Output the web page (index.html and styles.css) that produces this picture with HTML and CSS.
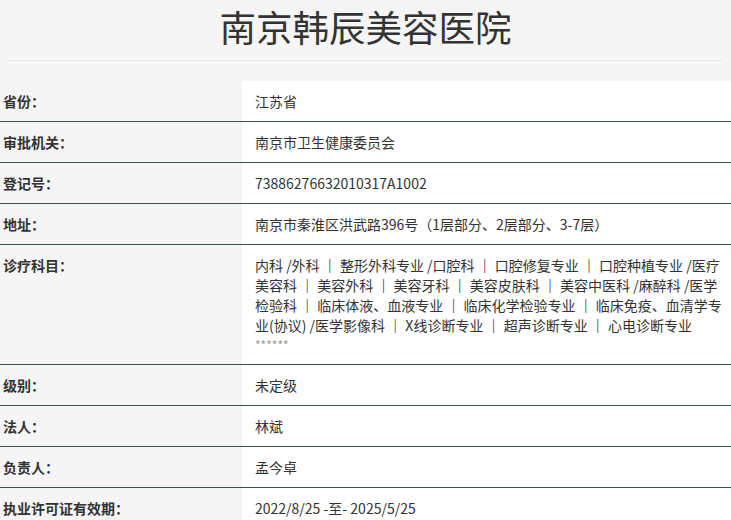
FILE: index.html
```html
<!DOCTYPE html>
<html lang="zh-CN">
<head>
<meta charset="utf-8">
<title>南京韩辰美容医院</title>
<link rel="stylesheet" href="styles.css">
</head>
<body>
<header class="head">
  <h1 class="title">南京韩辰美容医院</h1>
  <div class="rule"></div>
</header>
<div class="info">
  <div class="row"><div class="label">省份：</div><div class="value">江苏省</div></div>
  <div class="row"><div class="label">审批机关：</div><div class="value">南京市卫生健康委员会</div></div>
  <div class="row"><div class="label">登记号：</div><div class="value">73886276632010317A1002</div></div>
  <div class="row"><div class="label">地址：</div><div class="value">南京市秦淮区洪武路396号（1层部分、2层部分、3-7层）</div></div>
  <div class="row"><div class="label">诊疗科目：</div><div class="value">内科 /外科 <b class="sep">｜</b> 整形外科专业 /口腔科 <b class="sep">｜</b> 口腔修复专业 <b class="sep">｜</b> 口腔种植专业 /医疗美容科 <b class="sep">｜</b> 美容外科 <b class="sep">｜</b> 美容牙科 <b class="sep">｜</b> 美容皮肤科 <b class="sep">｜</b> 美容中医科 /麻醉科 /医学检验科 <b class="sep">｜</b> 临床体液、血液专业 <b class="sep">｜</b> 临床化学检验专业 <b class="sep">｜</b> 临床免疫、血清学专业(协议) /医学影像科 <b class="sep">｜</b> X线诊断专业 <b class="sep">｜</b> 超声诊断专业 <b class="sep">｜</b> 心电诊断专业<span class="stars">******</span></div></div>
  <div class="row"><div class="label">级别：</div><div class="value">未定级</div></div>
  <div class="row"><div class="label">法人：</div><div class="value">林斌</div></div>
  <div class="row"><div class="label">负责人：</div><div class="value">孟今卓</div></div>
  <div class="row"><div class="label">执业许可证有效期：</div><div class="value">2022/8/25 -至- 2025/5/25</div></div>
</div>
</body>
</html>
```
FILE: styles.css
```css
html, body {
  margin: 0;
  padding: 0;
  background: #f5f5f5;
  font-family: "Noto Sans CJK SC", "Noto Sans", sans-serif;
  color: #333;
}
.head {
  height: 81px;
  display: flex;
  flex-direction: column;
}
.title {
  margin: 0;
  font-size: 36.5px;
  line-height: 54px;
  font-weight: 400;
  text-align: center;
  color: #333;
}
.rule {
  margin: 6px 8px 0 8px;
  height: 1px;
  background: #eaeaea;
}
.info {
  display: flex;
  flex-direction: column;
}
.row {
  display: grid;
  grid-template-columns: 242px 1fr;
  border-bottom: 1px solid #2c5a45;
  font-size: 14px;
  line-height: 20px;
}
.label {
  padding: 10px 0 10px 3px;
  font-weight: 700;
  background: #f5f5f5;
}
.value {
  padding: 10px 4px 10px 13px;
  background: #fff;
}
.sep {
  font-weight: 700;
  color: #222;
}
.stars {
  display: block;
  color: #999;
  font-size: 12px;
  line-height: 19px;
}
```
